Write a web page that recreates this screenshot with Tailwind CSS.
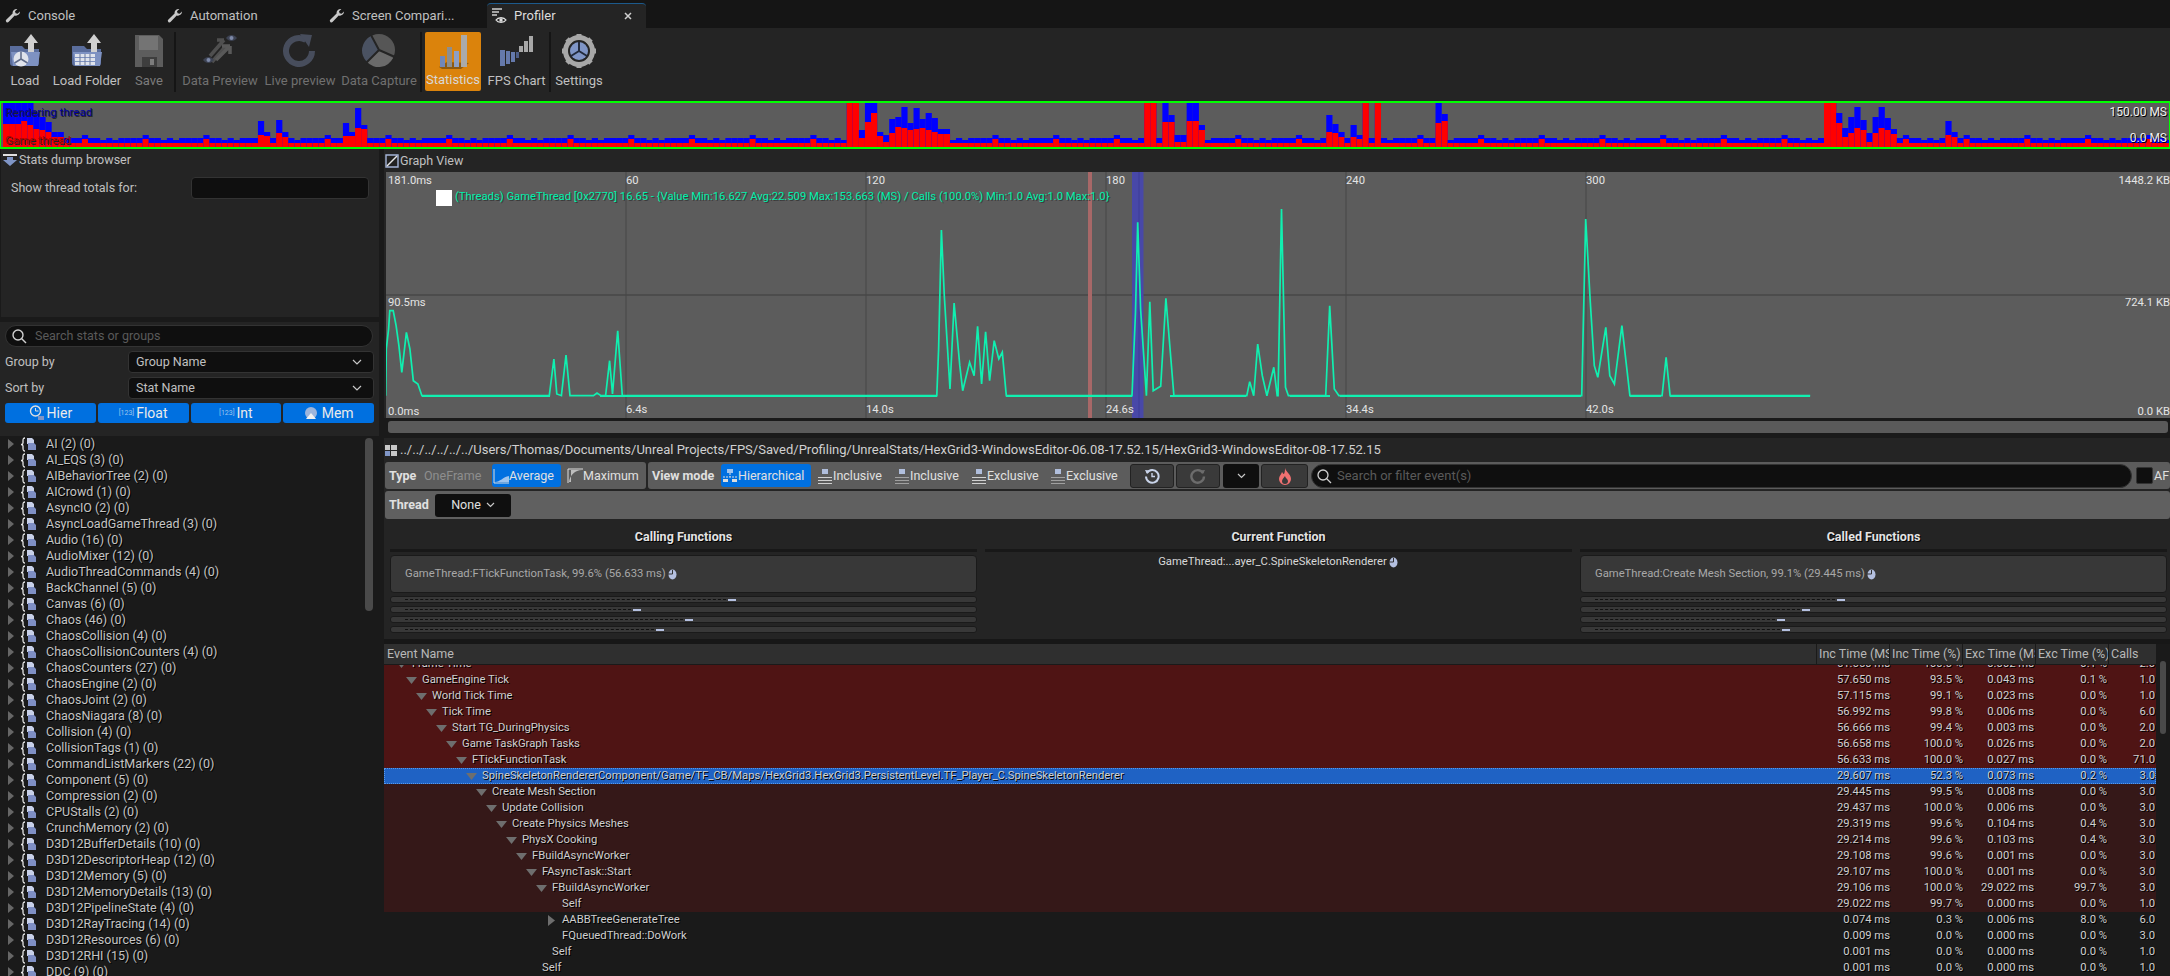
<!DOCTYPE html>
<html lang="en">
<head>
<meta charset="utf-8">
<title>Profiler</title>
<script src="https://cdn.jsdelivr.net/npm/@tailwindcss/browser@4"></script>
</head>
<body class="bg-[#242424]">
<div class="w-[2170px] h-[976px] overflow-hidden flex flex-col bg-[#242424] text-[#c0c0c0] text-[12px] leading-[16px] font-['Roboto',sans-serif]">

  <!-- tabs -->
  <div class="h-[28px] shrink-0 bg-[#151515] flex items-end text-[13px]">
    <div class="w-[162px] h-[25px] flex items-center gap-[7px] pl-[5px]">
      <svg class="w-[16px] h-[16px]" viewBox="0 0 16 16"><path d="M15 3.500a4 4 0 0 1-5.300 3.900L3.500 14a1.600 1.600 0 0 1-2.300-2.200l6.400-6.400A4 4 0 0 1 12.400 1L10 3.300l.6 2 2 .5L15 3.500z" fill="#c8c8c8"/></svg>
      <span>Console</span>
    </div>
    <div class="w-[162px] h-[25px] flex items-center gap-[7px] pl-[5px]">
      <svg class="w-[16px] h-[16px]" viewBox="0 0 16 16"><path d="M15 3.500a4 4 0 0 1-5.300 3.900L3.500 14a1.600 1.600 0 0 1-2.300-2.200l6.400-6.400A4 4 0 0 1 12.400 1L10 3.300l.6 2 2 .5L15 3.500z" fill="#c8c8c8"/></svg>
      <span>Automation</span>
    </div>
    <div class="w-[163px] h-[25px] flex items-center gap-[7px] pl-[5px] whitespace-nowrap">
      <svg class="w-[16px] h-[16px] shrink-0" viewBox="0 0 16 16"><path d="M15 3.500a4 4 0 0 1-5.300 3.900L3.500 14a1.600 1.600 0 0 1-2.300-2.200l6.400-6.400A4 4 0 0 1 12.400 1L10 3.300l.6 2 2 .5L15 3.500z" fill="#c8c8c8"/></svg>
      <span>Screen Compari...</span>
    </div>
    <div class="w-[159px] h-[25px] bg-[#242424] rounded-t-[4px] border-t border-[#1c5a8c] flex items-center pl-[4px] pr-[14px] text-[#dcdcdc]">
      <svg class="w-[18px] h-[18px] mr-[5px] shrink-0" viewBox="0 0 18 18"><path d="M1 2h10M1 5h7M1 8h5" stroke="#d0d0d0" stroke-width="1.400"/><path d="M5 13c2-3 8-3 10 0-2 3-8 3-10 0z" fill="none" stroke="#e0e0e0" stroke-width="1.300"/><circle cx="10" cy="13" r="1.700" fill="#e0e0e0"/></svg>
      <span class="flex-1">Profiler</span>
      <svg class="w-[8px] h-[8px]" viewBox="0 0 8 8"><path d="M1 1l6 6M7 1L1 7" stroke="#d0d0d0" stroke-width="1.500"/></svg>
    </div>
  </div>

  <!-- toolbar -->
  <div class="h-[73px] shrink-0 flex items-start pt-[4px] text-[13px] bg-[#242424] whitespace-nowrap">
    <div class="w-[50px] h-[60px] flex flex-col items-center justify-between pb-[3px]">
      <svg class="w-[38px] h-[38px]" viewBox="0 0 38 38"><path d="M4 14h12l3 3h14v14a3 3 0 0 1-3 3H7a3 3 0 0 1-3-3z" fill="#5a6d9c"/><path d="M5 20h29l-2 14H7z" fill="#7e92c2"/><path d="M25 2l7 9h-4v9h-6v-9h-4z" fill="#d0d0d0"/><circle cx="15" cy="27" r="7.500" fill="#dfe3ec"/><path d="M15 27V19.500M15 27l-6.500 4M15 27l6.500 4" stroke="#5f6b88" stroke-width="1.500"/></svg>
      <span>Load</span>
    </div>
    <div class="w-[74px] h-[60px] flex flex-col items-center justify-between pb-[3px]">
      <svg class="w-[38px] h-[38px]" viewBox="0 0 38 38"><path d="M4 14h12l3 3h14v14a3 3 0 0 1-3 3H7a3 3 0 0 1-3-3z" fill="#5a6d9c"/><path d="M5 20h29l-2 14H7z" fill="#7e92c2"/><path d="M26 2l7 9h-4v9h-6v-9h-4z" fill="#d0d0d0"/><path d="M7 22h20v3H7zM7 26h20v3H7zM7 30h20v3H7z" fill="#dfe3ec"/><path d="M12 22v11M17 22v11M22 22v11" stroke="#6b7899"/></svg>
      <span>Load Folder</span>
    </div>
    <div class="w-[50px] h-[60px] flex flex-col items-center justify-between pb-[3px] text-[#7c7c7c]">
      <svg class="w-[36px] h-[36px] mt-[1px]" viewBox="0 0 36 36"><path d="M4 2h24l4 4v28H4z" fill="#5d5d5d"/><path d="M8 3h19v14H8z" fill="#747474"/><path d="M11 24h15v10H11z" fill="#3e3e3e"/><path d="M19 26h4v6h-4z" fill="#7c7c7c"/></svg>
      <span>Save</span>
    </div>
    <div class="w-[2px] h-[60px] bg-[#151515]"></div>
    <div class="w-[84px] h-[60px] flex flex-col items-center justify-between pb-[3px] text-[#707070] ml-[2px]">
      <svg class="w-[36px] h-[36px]" viewBox="0 0 36 36"><path d="M8 24L22 8M22 8h-7M24 14l-14 16" stroke="#4f4f4f" stroke-width="3.500" fill="none"/><path d="M14 28l14-14M28 14v8M28 14h-8" stroke="#595959" stroke-width="3.500" fill="none"/><path d="M24 6c3-4 8-4 11 0-3 4-8 4-11 0z" fill="#3d4353"/><circle cx="29.500" cy="6" r="2" fill="#7d89a8"/><path d="M1 28c3-4 8-4 11 0-3 4-8 4-11 0z" fill="#3d4353"/><circle cx="6.500" cy="28" r="2" fill="#7d89a8"/></svg>
      <span>Data Preview</span>
    </div>
    <div class="w-[76px] h-[60px] flex flex-col items-center justify-between pb-[3px] text-[#707070]">
      <svg class="w-[36px] h-[36px]" viewBox="0 0 36 36"><path d="M24 8a13 13 0 1 0 6 11" fill="none" stroke="#474d5c" stroke-width="6"/><path d="M18 2l12 1-3 12z" fill="#474d5c"/></svg>
      <span>Live preview</span>
    </div>
    <div class="w-[82px] h-[60px] flex flex-col items-center justify-between pb-[3px] text-[#707070]">
      <svg class="w-[36px] h-[36px]" viewBox="0 0 36 36"><circle cx="18" cy="18" r="16" fill="#565656"/><path d="M18 18L10 4A16 16 0 0 0 6 30z" fill="#4a5262"/><path d="M18 18L6 30a16 16 0 0 0 26-4z" fill="#6a6a6a"/><path d="M18 18L10 3M18 18L5 31M18 18l16 7" stroke="#242424" stroke-width="2"/></svg>
      <span>Data Capture</span>
    </div>
    <div class="w-[2px] h-[60px] bg-[#151515]"></div>
    <div class="w-[56px] h-[59px] ml-[3px] bg-[#db830c] rounded-[2px] flex flex-col items-center justify-between pb-[3px] pt-[1px] text-[#d8d8d8]">
      <svg class="w-[38px] h-[38px]" viewBox="0 0 38 38"><path d="M5 34l8-5 22 1-8 6H8z" fill="#8e5a10"/><path d="M6 23h5v11H6z" fill="#7187b8"/><path d="M13 14h5v20h-5z" fill="#8e8e8e"/><path d="M20 18h5v16h-5z" fill="#8e9fc4"/><path d="M27 2h6v32h-6z" fill="#aaaaaa"/></svg>
      <span>Statistics</span>
    </div>
    <div class="w-[65px] h-[60px] ml-[3px] flex flex-col items-center justify-between pb-[3px]">
      <svg class="w-[38px] h-[38px]" viewBox="0 0 38 38"><path d="M2 18h5v16H2zM8 19h4v13H8zM13 20h4v10h-4z" fill="#6579ab"/><path d="M18 20h3v6h-3z" fill="#4d5d86"/><path d="M21 14h4v6h-4zM26 9h4v11h-4zM31 4h4v16h-4z" fill="#a8a8a8"/></svg>
      <span>FPS Chart</span>
    </div>
    <div class="w-[2px] h-[60px] bg-[#151515]"></div>
    <div class="w-[52px] h-[60px] ml-[2px] flex flex-col items-center justify-between pb-[3px]">
      <svg class="w-[38px] h-[38px]" viewBox="0 0 38 38"><circle cx="19" cy="19" r="13.500" fill="none" stroke="#a8a8a8" stroke-width="5"/><path d="M19 2v6M19 30v6M2 19h6M30 19h6M7 7l4 4M27 27l4 4M31 7l-4 4M11 27l-4 4" stroke="#a8a8a8" stroke-width="5"/><circle cx="19" cy="19" r="9" fill="#7f95c6"/><path d="M19 19v-9M19 19l-8 5M19 19l8 5" stroke="#222a3c" stroke-width="2"/></svg>
      <span>Settings</span>
    </div>
  </div>

  <!-- mini graph -->
  <div class="relative h-[48px] shrink-0 border-y-2 border-x border-[#00ff00] bg-[#5c5c5c] overflow-hidden">
    <svg id="mini" class="absolute -left-[1px] -top-[2px] w-[2170px] h-[48px]" viewBox="0 101 2170 48"></svg>
    <span class="absolute left-[4px] top-[1px] text-[11.500px] text-[#0000a0] [text-shadow:1px_1px_0_#222]">Rendering thread</span>
    <span class="absolute left-[4px] top-[29px] text-[11.500px] text-[#b00000] [text-shadow:1px_1px_0_#222]">Game thread</span>
    <span class="absolute right-[2px] top-[1px] text-[#f0f0f0] [text-shadow:1px_1px_0_#000]">150.00 MS</span>
    <span class="absolute right-[2px] top-[27px] text-[#f0f0f0] [text-shadow:1px_1px_0_#000]">0.0 MS</span>
  </div>

  <!-- main -->
  <div class="flex-1 min-h-0 flex bg-[#1a1a1a]">
    <!-- left -->
    <div class="w-[379px] shrink-0 flex flex-col bg-[#1a1a1a]">
      <div class="h-[168px] shrink-0 bg-[#242424] border-l border-[#1a1a1a] text-[12.500px]">
        <div class="h-[22px] flex items-center pl-[2px] gap-[2px]">
          <svg class="w-[14px] h-[14px]" viewBox="0 0 14 14"><path d="M0 1h14v2H0z" fill="#e0e0e0"/><path d="M4 4h6v3h4l-7 6-7-6h4z" fill="#7f95c6"/></svg>
          <span>Stats dump browser</span>
        </div>
        <div class="flex items-center h-[23px] mt-[5px] pl-[10px]">
          <span class="w-[180px]">Show thread totals for:</span>
          <div class="w-[178px] h-[22px] bg-[#0f0f0f] border border-[#333] rounded-[4px]"></div>
        </div>
      </div>
      <div class="h-[5px] shrink-0"></div>
      <div class="h-[114px] shrink-0 bg-[#242424] px-[5px] pt-[3px] text-[12.500px]">
        <div class="h-[22px] bg-[#0f0f0f] border border-[#333] rounded-full flex items-center pl-[5px] gap-[8px] text-[#5a5a5a] mr-[1px]">
          <svg class="w-[16px] h-[16px]" viewBox="0 0 16 16"><circle cx="7" cy="7" r="5" fill="none" stroke="#d0d0d0" stroke-width="1.400"/><path d="M10.500 10.500L15 15" stroke="#d0d0d0" stroke-width="1.400"/></svg>
          <span>Search stats or groups</span>
        </div>
        <div class="flex items-center h-[22px] mt-[4px]">
          <span class="w-[123px]">Group by</span>
          <div class="w-[246px] h-[22px] bg-[#0f0f0f] border border-[#333] rounded-[4px] flex items-center justify-between px-[7px]"><span>Group Name</span><svg class="w-[10px] h-[6px] mr-[4px]" viewBox="0 0 10 6"><path d="M1 1l4 4 4-4" fill="none" stroke="#c8c8c8" stroke-width="1.200"/></svg></div>
        </div>
        <div class="flex items-center h-[22px] mt-[4px]">
          <span class="w-[123px]">Sort by</span>
          <div class="w-[246px] h-[22px] bg-[#0f0f0f] border border-[#333] rounded-[4px] flex items-center justify-between px-[7px]"><span>Stat Name</span><svg class="w-[10px] h-[6px] mr-[4px]" viewBox="0 0 10 6"><path d="M1 1l4 4 4-4" fill="none" stroke="#c8c8c8" stroke-width="1.200"/></svg></div>
        </div>
        <div class="flex gap-[2px] mt-[4px] h-[20px] text-[14px] text-[#eaeaea]">
          <div class="w-[91px] bg-[#0070e0] rounded-[3px] flex items-center justify-center gap-[2px]">
            <svg class="w-[16px] h-[16px]" viewBox="0 0 16 16"><circle cx="6.500" cy="6" r="5" fill="none" stroke="#e0e0e0" stroke-width="1.400"/><path d="M6.500 3v3h3" fill="none" stroke="#e0e0e0"/><path d="M9 11h6v4H9z" fill="#7f95c6"/></svg>
            <span>Hier</span>
          </div>
          <div class="w-[91px] bg-[#0070e0] rounded-[3px] flex items-center justify-center gap-[2px]"><span class="text-[7px] text-[#9fc4ee]">[123]</span><span>Float</span></div>
          <div class="w-[91px] bg-[#0070e0] rounded-[3px] flex items-center justify-center gap-[2px]"><span class="text-[7px] text-[#9fc4ee]">[123]</span><span>Int</span></div>
          <div class="w-[91px] bg-[#0070e0] rounded-[3px] flex items-center justify-center gap-[4px]">
            <svg class="w-[14px] h-[14px]" viewBox="0 0 14 14"><circle cx="7" cy="7" r="6" fill="#9db5dc"/><path d="M7 7l5 6H2z" fill="#f0f0f0"/></svg>
            <span>Mem</span>
          </div>
        </div>
      </div>
      <div class="relative flex-1 min-h-0 ml-[3px] overflow-hidden bg-[#1a1a1a]">
        <div id="statList"></div>
        <div class="absolute left-[362px] top-[2px] w-[8px] h-[173px] rounded-full bg-[#4a4a4a]"></div>
      </div>
    </div>

    <!-- right -->
    <div class="flex-1 min-w-0 flex flex-col bg-[#242424] border-l-[5px] border-[#1a1a1a]">
      <div class="h-[23px] shrink-0 flex items-center pl-[1px] gap-[1px] text-[12.500px]">
        <svg class="w-[14px] h-[14px]" viewBox="0 0 14 14"><path d="M1 1h12v12H1z" fill="#222" stroke="#a4b4d8" stroke-width="1.400"/><path d="M2 12L12 2" stroke="#e8e8e8" stroke-width="1.500"/></svg>
        <span>Graph View</span>
      </div>
      <div class="relative h-[246px] shrink-0 ml-[2px] bg-[#5c5c5c] text-[#e4e4e4] text-[11.250px] overflow-hidden">
        <svg id="trace" class="absolute left-0 top-0 w-[1784px] h-[246px]" viewBox="386 173 1784 246"></svg>
        <span class="absolute left-[2px] top-[1px]">181.0ms</span>
        <span class="absolute left-[2px] top-[123px]">90.5ms</span>
        <span class="absolute left-[2px] top-[232px]">0.0ms</span>
        <span class="absolute left-[240px] top-[1px]">60</span>
        <span class="absolute left-[480px] top-[1px]">120</span>
        <span class="absolute left-[720px] top-[1px]">180</span>
        <span class="absolute left-[960px] top-[1px]">240</span>
        <span class="absolute left-[1200px] top-[1px]">300</span>
        <span class="absolute left-[240px] top-[230px]">6.4s</span>
        <span class="absolute left-[480px] top-[230px]">14.0s</span>
        <span class="absolute left-[720px] top-[230px]">24.6s</span>
        <span class="absolute left-[960px] top-[230px]">34.4s</span>
        <span class="absolute left-[1200px] top-[230px]">42.0s</span>
        <span class="absolute right-0 top-[1px]">1448.2 KB</span>
        <span class="absolute right-0 top-[123px]">724.1 KB</span>
        <span class="absolute right-0 top-[232px]">0.0 KB</span>
        <div class="absolute left-[50px] top-[18px] w-[16px] h-[16px] bg-white"></div>
        <span class="absolute left-[69px] top-[17px] whitespace-nowrap text-[#00f0ac] [text-shadow:1px_1px_0_#3a3a3a]">(Threads) GameThread [0x2770] 16.65 - {Value Min:16.627 Avg:22.509 Max:153.663 (MS) / Calls (100.0%) Min:1.0 Avg:1.0 Max:1.0}</span>
      </div>
      <div class="h-[20px] shrink-0 bg-[#1a1a1a] pt-[3px] pl-[4px] pr-[2px] pb-[5px]"><div class="h-[12px] bg-[#5a5a5a] rounded-[3px]"></div></div>

      <div class="h-[23px] shrink-0 flex items-center gap-[2px] whitespace-nowrap text-[#d0d0d0]">
        <svg class="w-[14px] h-[14px]" viewBox="0 0 14 14"><path d="M1 2h5v5H1zM7 2h6v5H7zM7 8h6v5H7z" fill="#c8c8c8"/><path d="M1 8h5v5H1z" fill="#7f95c6"/></svg>
        <span class="text-[13px]">../../../../../../Users/Thomas/Documents/Unreal Projects/FPS/Saved/Profiling/UnrealStats/HexGrid3-WindowsEditor-06.08-17.52.15/HexGrid3-WindowsEditor-08-17.52.15</span>
      </div>

      <!-- filter row 1 -->
      <div class="h-[27px] shrink-0 mt-[1px] ml-[1px] flex items-center gap-[2px] text-[#e0e0e0] text-[12.500px] whitespace-nowrap">
        <div class="h-[27px] w-[261px] bg-[#5c5c5c] rounded-[3px] flex items-center pl-[4px]">
          <b class="w-[35px] font-bold">Type</b>
          <span class="w-[67px] text-[#8e8e8e]">OneFrame</span>
          <div class="w-[69px] h-[23px] ml-[1px] bg-[#0070e0] rounded-[3px] flex items-center pl-[1px]">
            <svg class="w-[16px] h-[16px]" viewBox="0 0 16 16"><path d="M1 1v14h15" fill="none" stroke="#ddd"/><path d="M2 14c5 0 8-5 14-6v6z" fill="#9fc4ee"/></svg><span>Average</span>
          </div>
          <div class="flex items-center pl-[6px]"><svg class="w-[16px] h-[16px]" viewBox="0 0 16 16"><path d="M1 15V1h15" fill="none" stroke="#ddd"/><path d="M2 14C3 7 8 2 15 2H4v12z" fill="#bdbdbd"/></svg><span>Maximum</span></div>
        </div>
        <div class="h-[27px] flex-1 min-w-0 bg-[#5c5c5c] rounded-[3px] flex items-center pl-[4px]">
          <b class="w-[69px] font-bold">View mode</b>
          <div class="w-[90px] h-[23px] bg-[#0070e0] rounded-[3px] flex items-center pl-[1px]">
            <svg class="w-[16px] h-[16px]" viewBox="0 0 16 16"><path d="M5 1h6v4H5z" fill="#9fc4ee"/><path d="M1 9h14M8 5v4" stroke="#ddd" stroke-dasharray="2 1"/><path d="M1 11h5v3H1zM10 11h5v3h-5z" fill="#ddd"/></svg><span>Hierarchical</span>
          </div>
          <div class="w-[83px] flex items-center pl-[6px]"><svg class="w-[16px] h-[16px]" viewBox="0 0 16 16"><path d="M5 1h6v5H5z" fill="#b0bedc"/><path d="M1 9h14v1H1zM1 12h14v1H1zM1 15h14v1H1z" fill="#d0d0d0" /></svg><span>Inclusive</span></div>
          <div class="w-[77px] flex items-center"><svg class="w-[16px] h-[16px]" viewBox="0 0 16 16"><path d="M5 1h6v5H5z" fill="#b0bedc"/><path d="M1 9h14v1H1zM1 12h14v1H1zM1 15h14v1H1z" fill="#a0a0a0"/></svg><span>Inclusive</span></div>
          <div class="w-[79px] flex items-center"><svg class="w-[16px] h-[16px]" viewBox="0 0 16 16"><path d="M5 1h6v5H5z" fill="#b0bedc"/><path d="M1 9h14v1H1zM1 12h14v1H1zM1 15h14v1H1z" fill="#d0d0d0"/></svg><span>Exclusive</span></div>
          <div class="w-[80px] flex items-center"><svg class="w-[16px] h-[16px]" viewBox="0 0 16 16"><path d="M5 1h6v5H5z" fill="#b0bedc"/><path d="M1 9h14v1H1zM1 12h14v1H1zM1 15h14v1H1z" fill="#a0a0a0"/></svg><span>Exclusive</span></div>
          <div class="w-[44px] h-[24px] bg-[#3a3a3a] border border-[#222] rounded-[3px] flex items-center justify-center">
            <svg class="w-[16px] h-[16px]" viewBox="0 0 16 16"><path d="M3 5a6.300 6.300 0 1 1-1 3.500" fill="none" stroke="#c9d4ea" stroke-width="2"/><path d="M1 2l5 .5L3 6z" fill="#c9d4ea"/><path d="M8 5v3.500h3" fill="none" stroke="#c9d4ea" stroke-width="1.400"/></svg>
          </div>
          <div class="w-[44px] h-[24px] ml-[2px] bg-[#3a3a3a] border border-[#222] rounded-[3px] flex items-center justify-center">
            <svg class="w-[16px] h-[16px]" viewBox="0 0 16 16"><path d="M13 5a6.300 6.300 0 1 0 1 3.500" fill="none" stroke="#6c6c6c" stroke-width="2.400"/><path d="M15 2l-5 .5L13 6z" fill="#6c6c6c"/></svg>
          </div>
          <div class="w-[36px] h-[24px] ml-[3px] bg-[#0f0f0f] rounded-[3px] flex items-center justify-center">
            <svg class="w-[9px] h-[6px]" viewBox="0 0 9 6"><path d="M1 1l3.500 3.500L8 1" fill="none" stroke="#c8c8c8" stroke-width="1.200"/></svg>
          </div>
          <div class="w-[47px] h-[24px] ml-[2px] bg-[#3a3a3a] border border-[#222] rounded-[3px] flex items-center justify-center">
            <svg class="w-[14px] h-[18px]" viewBox="0 0 14 18"><path d="M7 1c1 4 6 6 6 11a6 6 0 0 1-12 0c0-3 2-4 3-7 1 1 1 2 2 2 1-2 1-4 1-6z" fill="#f07070"/><path d="M7 9c0 2 3 3 3 5a3 3 0 0 1-6 0c0-2 2-3 3-5z" fill="#3a3a3a"/></svg>
          </div>
          <div class="flex-1 min-w-0 h-[24px] ml-[3px] bg-[#0f0f0f] border border-[#333] rounded-full flex items-center pl-[4px] gap-[5px] text-[#5a5a5a] text-[13px]">
            <svg class="w-[16px] h-[16px]" viewBox="0 0 16 16"><circle cx="7" cy="7" r="5" fill="none" stroke="#d0d0d0" stroke-width="1.300"/><path d="M10.500 10.500L15 15" stroke="#d0d0d0" stroke-width="1.300"/></svg>
            <span>Search or filter event(s)</span>
          </div>
          <div class="w-[17px] h-[17px] ml-[4px] bg-[#0f0f0f] border border-[#333] rounded-[2px] shrink-0"></div>
          <span class="w-[16px] shrink-0 ml-[1px]">AF</span>
        </div>
      </div>

      <!-- filter row 2 -->
      <div class="h-[28px] shrink-0 ml-[1px] mt-[2px] bg-[#606060] rounded-[3px] flex items-center pl-[4px] text-[#e0e0e0] text-[12.500px]">
        <b class="w-[46px] font-bold">Thread</b>
        <div class="w-[76px] h-[23px] bg-[#0f0f0f] rounded-[3px] flex items-center justify-center gap-[5px]"><span>None</span><svg class="w-[9px] h-[6px]" viewBox="0 0 9 6"><path d="M1 1l3.500 3.500L8 1" fill="none" stroke="#c8c8c8" stroke-width="1.200"/></svg></div>
      </div>

      <!-- functions -->
      <div class="h-[120px] shrink-0 flex pl-[6px] pr-[3px] gap-[8px] text-[11.250px]">
        <div class="flex-1 min-w-0">
          <div class="h-[30px] flex items-end justify-center font-bold text-[12.500px] text-[#e4e4e4] [text-shadow:1px_1px_0_#000] pb-[4px]">Calling Functions</div>
          <div class="h-[3px] bg-[#181818]"></div>
          <div class="mt-[3px] h-[38px] bg-[#383838] border border-[#1a1a1a] rounded-[4px] flex items-center pl-[14px] gap-[1px] text-[#a8a8a8]">
            <span>GameThread:FTickFunctionTask, 99.6% (56.633 ms)</span>
            <svg class="w-[11px] h-[11px]" viewBox="0 0 11 11"><ellipse cx="5.500" cy="5.500" rx="4" ry="5" fill="#b4c0e0"/><path d="M5.500 1v4H1" fill="none" stroke="#333"/></svg>
          </div>
          <div class="mt-[3px] h-[7px] bg-[#383838] border border-[#1a1a1a] rounded-[3px] flex items-center pl-[14px]"><div class="w-[150px] border-t border-dashed border-[#111]"></div><div class="w-[170px] ml-[1px] border-t border-dashed border-[#111]"></div><div class="w-[8px] h-[2px] ml-[2px] bg-[#b4c0e0]"></div></div>
          <div class="mt-[3px] h-[7px] bg-[#383838] border border-[#1a1a1a] rounded-[3px] flex items-center pl-[14px]"><div class="w-[226px] border-t border-dashed border-[#111]"></div><div class="w-[8px] h-[2px] ml-[2px] bg-[#b4c0e0]"></div></div>
          <div class="mt-[3px] h-[7px] bg-[#383838] border border-[#1a1a1a] rounded-[3px] flex items-center pl-[14px]"><div class="w-[278px] border-t border-dashed border-[#111]"></div><div class="w-[8px] h-[2px] ml-[2px] bg-[#b4c0e0]"></div></div>
          <div class="mt-[3px] h-[7px] bg-[#383838] border border-[#1a1a1a] rounded-[3px] flex items-center pl-[14px]"><div class="w-[249px] border-t border-dashed border-[#111]"></div><div class="w-[8px] h-[2px] ml-[2px] bg-[#b4c0e0]"></div></div>
        </div>
        <div class="flex-1 min-w-0">
          <div class="h-[30px] flex items-end justify-center font-bold text-[12.500px] text-[#e4e4e4] [text-shadow:1px_1px_0_#000] pb-[4px]">Current Function</div>
          <div class="h-[3px] bg-[#181818]"></div>
          <div class="mt-[2px] flex items-center justify-center gap-[1px] text-[#d8d8d8] h-[16px]">
            <span>GameThread:...ayer_C.SpineSkeletonRenderer</span>
            <svg class="w-[11px] h-[11px]" viewBox="0 0 11 11"><ellipse cx="5.500" cy="5.500" rx="4" ry="5" fill="#b4c0e0"/><path d="M5.500 1v4H1" fill="none" stroke="#333"/></svg>
          </div>
        </div>
        <div class="flex-1 min-w-0">
          <div class="h-[30px] flex items-end justify-center font-bold text-[12.500px] text-[#e4e4e4] [text-shadow:1px_1px_0_#000] pb-[4px]">Called Functions</div>
          <div class="h-[3px] bg-[#181818]"></div>
          <div class="mt-[3px] h-[38px] bg-[#383838] border border-[#1a1a1a] rounded-[4px] flex items-center pl-[14px] gap-[1px] text-[#a8a8a8]">
            <span>GameThread:Create Mesh Section, 99.1% (29.445 ms)</span>
            <svg class="w-[11px] h-[11px]" viewBox="0 0 11 11"><ellipse cx="5.500" cy="5.500" rx="4" ry="5" fill="#b4c0e0"/><path d="M5.500 1v4H1" fill="none" stroke="#333"/></svg>
          </div>
          <div class="mt-[3px] h-[7px] bg-[#383838] border border-[#1a1a1a] rounded-[3px] flex items-center pl-[14px]"><div class="w-[240px] border-t border-dashed border-[#111]"></div><div class="w-[8px] h-[2px] ml-[2px] bg-[#b4c0e0]"></div></div>
          <div class="mt-[3px] h-[7px] bg-[#383838] border border-[#1a1a1a] rounded-[3px] flex items-center pl-[14px]"><div class="w-[205px] border-t border-dashed border-[#111]"></div><div class="w-[8px] h-[2px] ml-[2px] bg-[#b4c0e0]"></div></div>
          <div class="mt-[3px] h-[7px] bg-[#383838] border border-[#1a1a1a] rounded-[3px] flex items-center pl-[14px]"><div class="w-[180px] border-t border-dashed border-[#111]"></div><div class="w-[8px] h-[2px] ml-[2px] bg-[#b4c0e0]"></div></div>
          <div class="mt-[3px] h-[7px] bg-[#383838] border border-[#1a1a1a] rounded-[3px] flex items-center pl-[14px]"><div class="w-[185px] border-t border-dashed border-[#111]"></div><div class="w-[8px] h-[2px] ml-[2px] bg-[#b4c0e0]"></div></div>
        </div>
      </div>

      <div class="h-[5px] shrink-0 bg-[#171717]"></div>

      <!-- table -->
      <div class="relative flex-1 min-h-0 overflow-hidden bg-[#1a1a1a]">
        <div class="h-[20px] flex items-center bg-[#2f2f2f] mr-[14px] text-[#b8b8b8] text-[12.500px]">
          <div class="w-[1432px] h-full flex items-center pl-[3px]">Event Name</div>
          <div class="w-[73px] h-full flex items-center pl-[2px] border-l border-[#1a1a1a] overflow-hidden whitespace-nowrap">Inc Time (MS)</div>
          <div class="w-[73px] h-full flex items-center pl-[2px] border-l border-[#1a1a1a] overflow-hidden whitespace-nowrap">Inc Time (%)</div>
          <div class="w-[73px] h-full flex items-center pl-[2px] border-l border-[#1a1a1a] overflow-hidden whitespace-nowrap">Exc Time (MS)</div>
          <div class="w-[73px] h-full flex items-center pl-[2px] border-l border-[#1a1a1a] overflow-hidden whitespace-nowrap">Exc Time (%)</div>
          <div class="flex-1 h-full flex items-center pl-[2px] border-l border-[#1a1a1a]">Calls</div>
        </div>
        <div class="h-[1px] bg-[#1a1a1a]"></div>
        <div class="overflow-hidden h-[312px] mr-[14px]">
          <div id="rows" class="-mt-[9px]"></div>
        </div>
        <div class="absolute right-[4px] top-[17px] w-[6px] h-[73px] rounded-full bg-[#4a4a4a]"></div>
      </div>
    </div>
  </div>
</div>

<script>
const stats=["AI (2) (0)","AI_EQS (3) (0)","AIBehaviorTree (2) (0)","AICrowd (1) (0)","AsyncIO (2) (0)","AsyncLoadGameThread (3) (0)","Audio (16) (0)","AudioMixer (12) (0)","AudioThreadCommands (4) (0)","BackChannel (5) (0)","Canvas (6) (0)","Chaos (46) (0)","ChaosCollision (4) (0)","ChaosCollisionCounters (4) (0)","ChaosCounters (27) (0)","ChaosEngine (2) (0)","ChaosJoint (2) (0)","ChaosNiagara (8) (0)","Collision (4) (0)","CollisionTags (1) (0)","CommandListMarkers (22) (0)","Component (5) (0)","Compression (2) (0)","CPUStalls (2) (0)","CrunchMemory (2) (0)","D3D12BufferDetails (10) (0)","D3D12DescriptorHeap (12) (0)","D3D12Memory (5) (0)","D3D12MemoryDetails (13) (0)","D3D12PipelineState (4) (0)","D3D12RayTracing (14) (0)","D3D12Resources (6) (0)","D3D12RHI (15) (0)","DDC (9) (0)"];
document.getElementById('statList').innerHTML=stats.map(s=>`<div class="h-[16px] flex items-center pl-[4px] text-[#c4c4c4] text-[12.500px] [text-shadow:1px_1px_0_#000] whitespace-nowrap"><svg class="w-[8px] h-[10px] shrink-0" viewBox="0 0 8 10"><path d="M1 0l6 5-6 5z" fill="#666"/></svg><svg class="w-[16px] h-[15px] ml-[5px] mr-[10px] shrink-0" viewBox="0 0 16 15"><path d="M5 1C3 1 3 2 3 4v2C3 7 2 7.500 1 7.500 2 7.500 3 8 3 9v2c0 2 0 3 2 3" fill="none" stroke="#e8e8e8" stroke-width="1.300"/><path d="M7 1h5l2 2v4H7z" fill="#c8d0e8"/><path d="M8 6h6l2 2v5H8z" fill="#7f8fc4"/></svg><span>${s}</span></div>`).join('');

const rows=[
[0,1,"Frame Time","61.660 ms","100.0 %","0.002 ms","0.1 %","2.0"],
[1,1,"GameEngine Tick","57.650 ms","93.5 %","0.043 ms","0.1 %","1.0"],
[2,1,"World Tick Time","57.115 ms","99.1 %","0.023 ms","0.0 %","1.0"],
[3,1,"Tick Time","56.992 ms","99.8 %","0.006 ms","0.0 %","6.0"],
[4,1,"Start TG_DuringPhysics","56.666 ms","99.4 %","0.003 ms","0.0 %","2.0"],
[5,1,"Game TaskGraph Tasks","56.658 ms","100.0 %","0.026 ms","0.0 %","2.0"],
[6,1,"FTickFunctionTask","56.633 ms","100.0 %","0.027 ms","0.0 %","71.0"],
[7,1,"SpineSkeletonRendererComponent/Game/TF_CB/Maps/HexGrid3.HexGrid3.PersistentLevel.TF_Player_C.SpineSkeletonRenderer","29.607 ms","52.3 %","0.073 ms","0.2 %","3.0"],
[8,1,"Create Mesh Section","29.445 ms","99.5 %","0.008 ms","0.0 %","3.0"],
[9,1,"Update Collision","29.437 ms","100.0 %","0.006 ms","0.0 %","3.0"],
[10,1,"Create Physics Meshes","29.319 ms","99.6 %","0.104 ms","0.4 %","3.0"],
[11,1,"PhysX Cooking","29.214 ms","99.6 %","0.103 ms","0.4 %","3.0"],
[12,1,"FBuildAsyncWorker","29.108 ms","99.6 %","0.001 ms","0.0 %","3.0"],
[13,1,"FAsyncTask::Start","29.107 ms","100.0 %","0.001 ms","0.0 %","3.0"],
[14,1,"FBuildAsyncWorker","29.106 ms","100.0 %","29.022 ms","99.7 %","3.0"],
[15,0,"Self","29.022 ms","99.7 %","0.000 ms","0.0 %","1.0"],
[15,2,"AABBTreeGenerateTree","0.074 ms","0.3 %","0.006 ms","8.0 %","6.0"],
[15,0,"FQueuedThread::DoWork","0.009 ms","0.0 %","0.000 ms","0.0 %","3.0"],
[14,0,"Self","0.001 ms","0.0 %","0.000 ms","0.0 %","1.0"],
[13,0,"Self","0.001 ms","0.0 %","0.000 ms","0.0 %","1.0"]];
document.getElementById('rows').innerHTML=rows.map((r,i)=>{
 const bg=i<7?'bg-[#4f1414]':i==7?'bg-[#1f62c4] outline outline-1 -outline-offset-1 outline-dotted outline-[#5a9ae8]':i<16?'bg-[#351818]':'bg-[#1a1a1a]';
 const arrow=r[1]==1?'<svg class="w-[11px] h-[7px]" viewBox="0 0 11 7"><path d="M0 0h11L5.500 7z" fill="#6e6e6e"/></svg>':r[1]==2?'<svg class="w-[7px] h-[11px] ml-[2px]" viewBox="0 0 7 11"><path d="M0 0l7 5.500-7 5.500z" fill="#6e6e6e"/></svg>':'';
 return `<div class="h-[16px] flex items-center whitespace-nowrap text-[#cfcfcf] text-[11.250px] [text-shadow:1px_1px_0_#000] ${bg}"><div class="w-[1433px] flex items-center overflow-hidden" style="padding-left:${12+r[0]*10}px"><span class="w-[16px] flex justify-start shrink-0">${arrow}</span><span>${r[2]}</span></div><div class="w-[73px] text-right">${r[3]}</div><div class="w-[73px] text-right">${r[4]}</div><div class="w-[71px] text-right">${r[5]}</div><div class="w-[73px] text-right">${r[6]}</div><div class="w-[48px] text-right">${r[7]}</div></div>`;
}).join('');

const spikes=[[3,19,103,124],[19,25,103,121],[25,31,103,125],[31,37,113,129],[37,43,117,130],[43,49,122,132],[49,61,132,137],
[256,262,121,135],[262,269,132,136],[274,281,120,133],[281,287,132,137],[342,347,123,136],[347,353,132,136],[353,359,108,128],[359,365,125,129],
[845,858,103,103],[858,864,130,138],[864,870,103,122],[870,877,103,113],[877,883,132,136],[883,889,135,142],[889,894,119,133],[894,900,117,127],[900,906,107,128],[906,912,123,130],[912,918,108,129],[918,924,119,128],[924,930,113,130],[930,936,118,132],[936,949,129,134],
[1143,1156,103,103],[1162,1168,103,122],[1168,1174,115,122],[1174,1186,135,142],[1186,1198,103,121],[1198,1204,125,130],
[1326,1332,115,132],[1332,1338,124,133],[1338,1344,132,137],[1350,1356,125,137],[1362,1369,103,103],[1375,1381,103,103],[1435,1441,103,123],[1441,1448,114,121],
[1824,1837,103,103],[1837,1843,113,123],[1843,1849,128,137],[1849,1855,117,133],[1855,1861,107,128],[1861,1867,120,130],[1867,1873,133,142],[1873,1879,117,133],[1879,1885,107,128],[1885,1891,118,130],[1891,1897,129,134],[1946,1952,121,135],[1952,1958,132,137]];
let m='';
for(let i=0;i<358;i++){
 const x=3+i*6.07,c=x+3;
 let b=138,r=143;
 if(i%10==3){b=135;r=139}else if(i%10==6||i%10==8){b=140}
 const s=spikes.find(a=>c>=a[0]&&c<a[1]);
 if(s){b=s[2];r=s[3]}
 m+=`<rect x="${x}" y="${b}" width="6.2" height="${147-b}" fill="#0000ff"/><rect x="${x}" y="${r}" width="6.2" height="${147-r}" fill="#ff0000"/>`;
}
document.getElementById('mini').innerHTML=m;

const a=[[10,740],[11,600],[15,540],[17,485],[23,485],[28,530],[33,590],[38,670],[42,610],[46,550],[52,600],[58,695],[66,705],[73,740],[295,740],[303,630],[308,735],[316,740],[324,618],[331,740],[372,740],[378,732],[385,740],[393,740],[400,635],[405,735],[414,545],[422,740],[970,740],[973,600],[978,243],[983,440],[993,720],[1000,462],[1010,650],[1015,725],[1027,640],[1035,680],[1041,532],[1048,705],[1055,548],[1062,695],[1070,575],[1078,630],[1084,610],[1091,740],[1310,740],[1316,490],[1320,220],[1325,480],[1335,740],[1341,458],[1347,725],[1360,712],[1369,448],[1383,740],[1510,740],[1515,698],[1522,740],[1529,585],[1537,680],[1545,740],[1557,655],[1563,740]];
const b=[[14,740],[20,180],[27,715],[32,740],[97,740],[104,470],[112,720],[120,740],[543,740],[550,210],[558,460],[565,650],[571,685],[585,535],[592,680],[600,705],[613,530],[627,740],[683,740],[690,625],[697,740],[941,740]];
const pts=a.map(p=>[380+p[0]/1.742,150+p[1]/3]).concat(b.map(p=>[1270+p[0]/1.742,150+p[1]/3])).map(p=>p[0].toFixed(1)+','+p[1].toFixed(1)).join(' ');
let g='';
[626,866,1106,1346,1586].forEach(x=>g+=`<path d="M${x} 173V419" stroke="#474747"/>`);
g+='<path d="M386 296H2170" stroke="#474747" stroke-width="1.5"/>';
g+='<rect x="1088" y="173" width="4" height="246" fill="#a86868"/>';
g+='<rect x="1132" y="173" width="11.500" height="246" fill="#4848a8"/><path d="M1139 173V419" stroke="#3c3c96"/>';
g+=`<polyline points="${pts}" fill="none" stroke="#10f0b0" stroke-width="1.7"/>`;
g+='<path d="M422 397H550M600 397H622M622 397H937M1006 397H1132M1170 397H1246M1290 397H1330M1340 397H1581M1630 397H1661M1670 397H1810" stroke="#10f0b0" stroke-width="2.2"/>';
document.getElementById('trace').innerHTML=g;
</script>
</body>
</html>
